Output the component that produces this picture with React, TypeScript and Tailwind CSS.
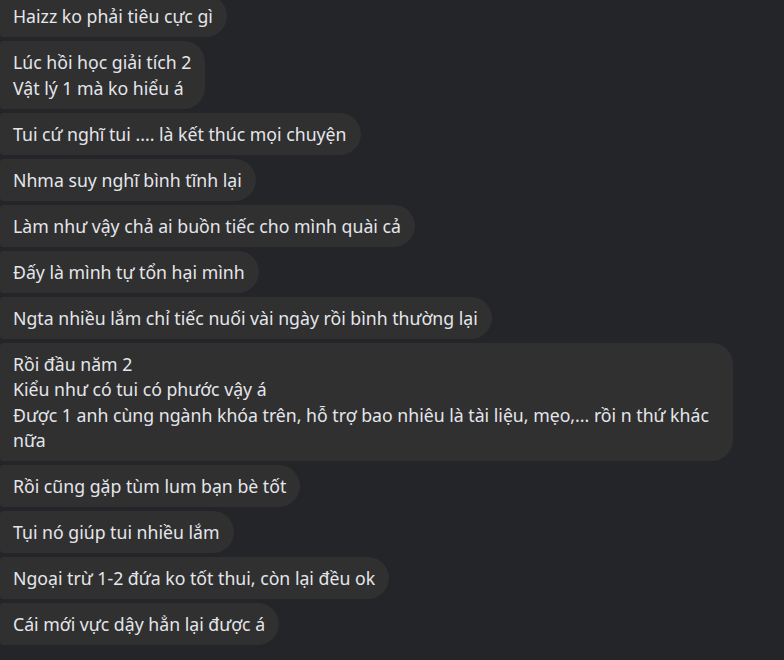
const messages = [
  'Haizz ko phải tiêu cực gì',
  'Lúc hồi học giải tích 2\nVật lý 1 mà ko hiểu á',
  'Tui cứ nghĩ tui .... là kết thúc mọi chuyện',
  'Nhma suy nghĩ bình tĩnh lại',
  'Làm như vậy chả ai buồn tiếc cho mình quài cả',
  'Đấy là mình tự tổn hại mình',
  'Ngta nhiều lắm chỉ tiếc nuối vài ngày rồi bình thường lại',
  'Rồi đầu năm 2\nKiểu như có tui có phước vậy á\nĐược 1 anh cùng ngành khóa trên, hỗ trợ bao nhiêu là tài liệu, mẹo,... rồi n thứ khác\nnữa',
  'Rồi cũng gặp tùm lum bạn bè tốt',
  'Tụi nó giúp tui nhiều lắm',
  'Ngoại trừ 1-2 đứa ko tốt thui, còn lại đều ok',
  'Cái mới vực dậy hẳn lại được á',
];

const App = () => (
  <div className="h-[660px] w-full overflow-hidden bg-[#242528] font-['Noto_Sans',sans-serif]">
    <div className="-mt-[5px] flex flex-col items-start gap-[4px]">
      {messages.map((text, i) => (
        <div
          key={i}
          className={`${text.length > 100 ? 'w-[733px]' : ''} max-w-[733px] whitespace-pre-line rounded-l-[4px] rounded-r-[21px] bg-[#303030] pb-[7.5px] pl-[13px] pr-[14px] pt-[9px] text-[17.7px] leading-[25.5px] text-[#e4e6eb]`}
        >
          {text}
        </div>
      ))}
    </div>
  </div>
);

export default App;
